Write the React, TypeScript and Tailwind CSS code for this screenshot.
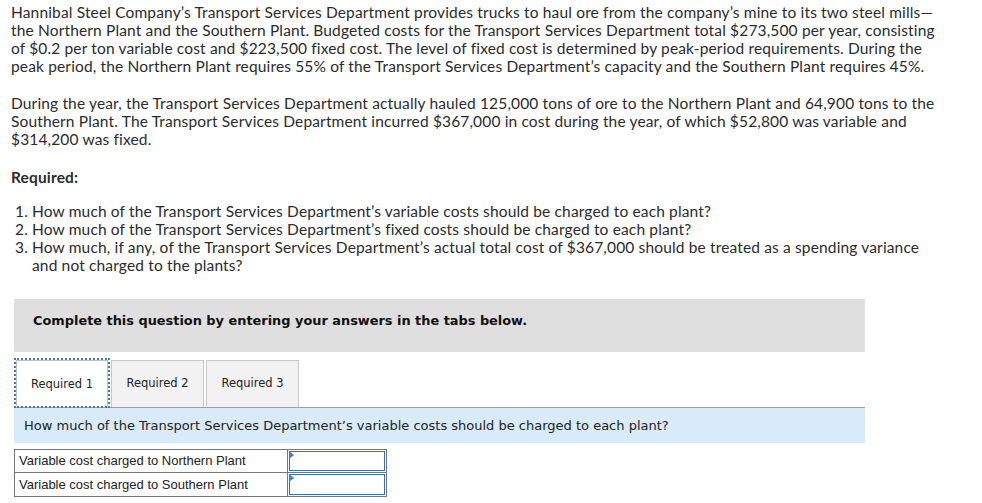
import React from "react";

const body = "font-['Lato','Liberation_Sans',sans-serif] text-[15.5px] leading-[18px] tracking-[0.15px] text-[#2b2b2b]";
const verdana = "font-['DejaVu_Sans','Verdana',sans-serif]";

function Tab({ label, active }: { label: string; active?: boolean }) {
  if (active) {
    return (
      <div className="relative z-10 -mb-[1px] h-[50px] w-[96px] border-2 border-dotted border-[#3b7bc6]">
        <div className={`flex h-full w-full items-center justify-center border border-b-0 border-[#c0c0c0] bg-white pt-[2px] ${verdana} text-[11.5px] text-[#222]`}>
          {label}
        </div>
      </div>
    );
  }
  return (
    <div className={`mt-[2px] flex h-[47px] w-[93px] items-center justify-center border border-b-0 border-[#c8c8c8] bg-[#f2f2f2] ${verdana} text-[11.5px] text-[#222]`}>
      {label}
    </div>
  );
}

function AnswerRow({ label, last }: { label: string; last?: boolean }) {
  return (
    <div className={`flex h-[23px] ${last ? "" : "border-b border-[#777]"}`}>
      <div className="flex w-[273px] items-center border-r border-[#777] pl-[4px] font-['Liberation_Sans',Arial,sans-serif] text-[13px] text-[#222]">
        {label}
      </div>
      <div className="relative w-[98px] p-px">
        <div className="h-full w-full border border-[#3d6eb4] bg-white" />
        <div className="absolute left-px top-px h-0 w-0 border-y-[4px] border-l-[5px] border-y-transparent border-l-[#3d7fd0]" />
      </div>
    </div>
  );
}

function Item({ n, children }: { n: string; children: React.ReactNode }) {
  return (
    <li className="flex">
      <span className="w-[21px] shrink-0 pr-[4px] text-right">{n}</span>
      <span>{children}</span>
    </li>
  );
}

export default function App() {
  return (
    <div className="min-h-screen bg-white px-[11px] pt-[3px]">
      <p className={body}>
        Hannibal Steel Company’s Transport Services Department provides trucks to haul ore from the company’s mine to its two steel mills—
        <br />
        the Northern Plant and the Southern Plant. Budgeted costs for the Transport Services Department total $273,500 per year, consisting
        <br />
        of $0.2 per ton variable cost and $223,500 fixed cost. The level of fixed cost is determined by peak-period requirements. During the
        <br />
        peak period, the Northern Plant requires 55% of the Transport Services Department’s capacity and the Southern Plant requires 45%.
      </p>
      <p className={`${body} mt-[19px]`}>
        During the year, the Transport Services Department actually hauled 125,000 tons of ore to the Northern Plant and 64,900 tons to the
        <br />
        Southern Plant. The Transport Services Department incurred $367,000 in cost during the year, of which $52,800 was variable and
        <br />
        $314,200 was fixed.
      </p>
      <p className={`${body} mt-[20px] font-bold`}>Required:</p>
      <ol className={`${body} mt-[16px]`}>
        <Item n="1.">How much of the Transport Services Department’s variable costs should be charged to each plant?</Item>
        <Item n="2.">How much of the Transport Services Department’s fixed costs should be charged to each plant?</Item>
        <Item n="3.">
          How much, if any, of the Transport Services Department’s actual total cost of $367,000 should be treated as a spending variance
          <br />
          and not charged to the plants?
        </Item>
      </ol>

      <div className="ml-[3px] mt-[25px] w-[851px]">
        <div className={`h-[53px] bg-[#dfdfdf] pl-[19px] pt-[14px] ${verdana} text-[12.9px] font-bold leading-[16px] text-[#111]`}>
          Complete this question by entering your answers in the tabs below.
        </div>
        <div className="mt-[6px] flex h-[49px] items-start">
          <Tab label="Required 1" active />
          <div className="w-px" />
          <Tab label="Required 2" />
          <div className="w-[2px]" />
          <Tab label="Required 3" />
        </div>
        <div className="border-t border-[#a0a0a0]" />
        <div className={`flex h-[35px] items-center bg-[#d9ebf8] pl-[10px] ${verdana} text-[13px] text-[#222]`}>
          How much of the Transport Services Department’s variable costs should be charged to each plant?
        </div>
        <div className="mt-[6px] w-[373px] border border-[#777]">
          <AnswerRow label="Variable cost charged to Northern Plant" />
          <AnswerRow label="Variable cost charged to Southern Plant" last />
        </div>
      </div>
    </div>
  );
}
